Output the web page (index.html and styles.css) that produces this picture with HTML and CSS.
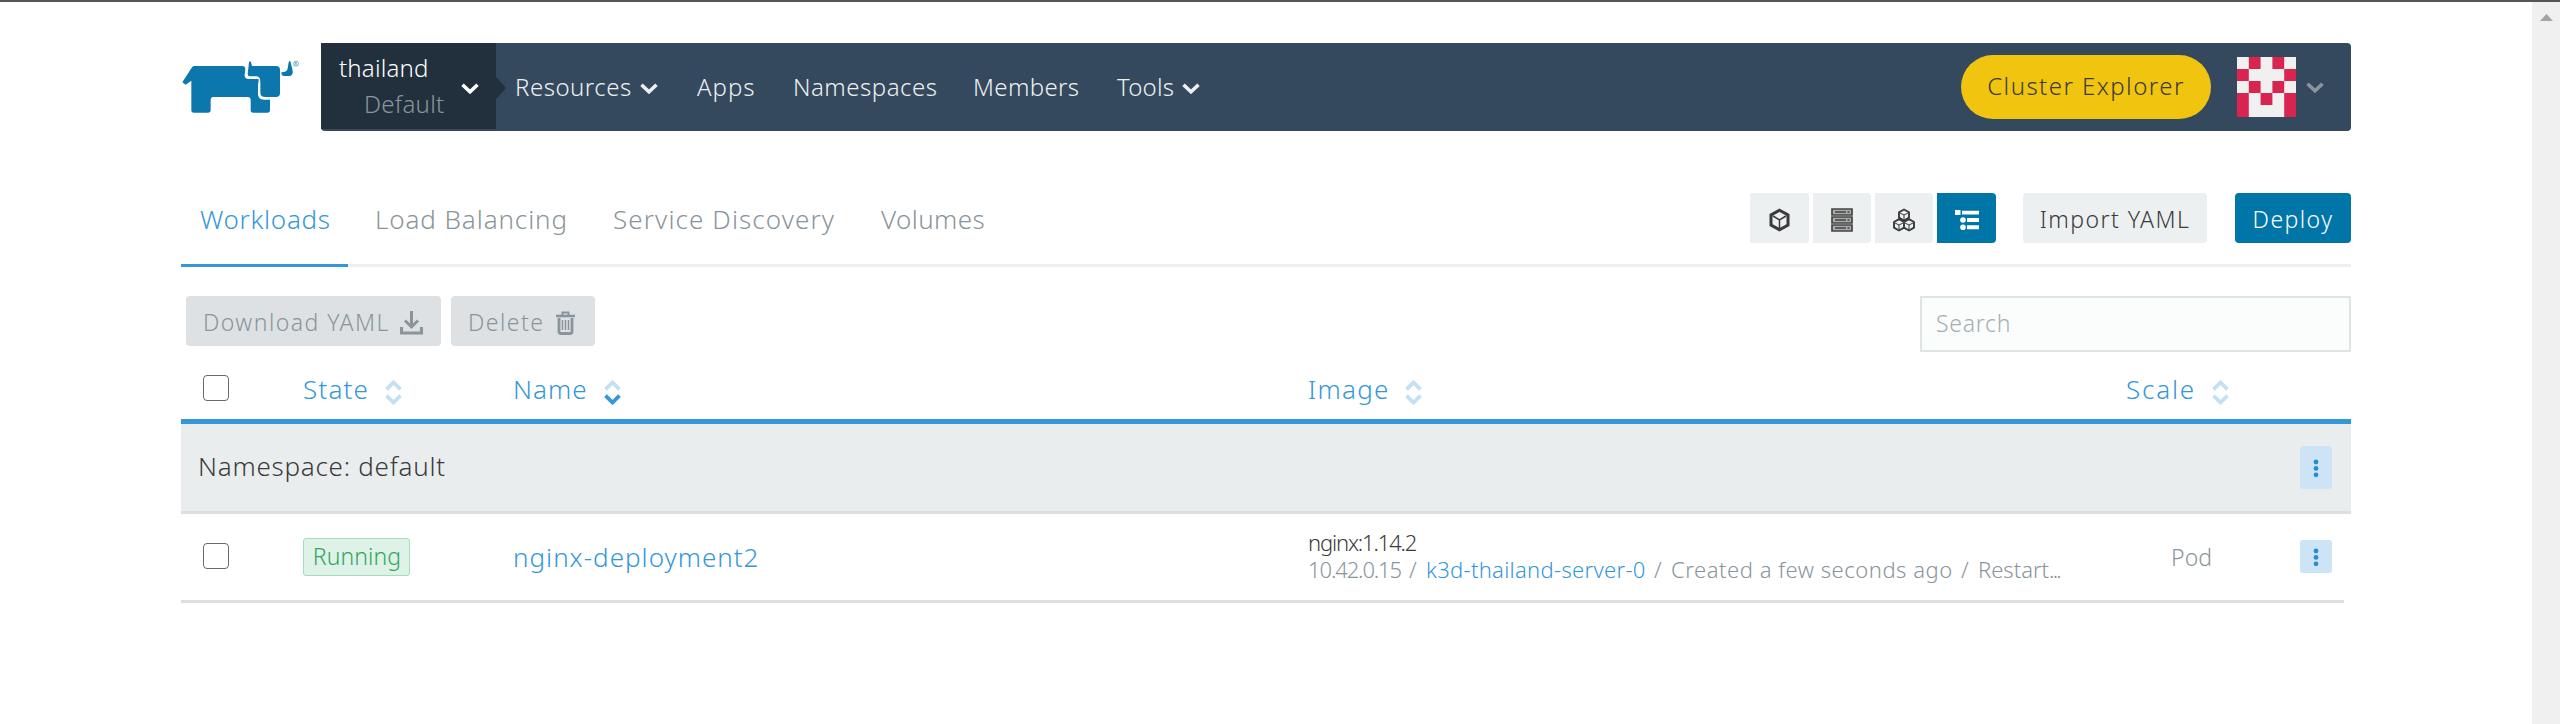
FILE: index.html
```html
<!DOCTYPE html>
<html lang="en">
<head>
<meta charset="utf-8">
<title>Workloads</title>
<link rel="stylesheet" href="styles.css">
</head>
<body>
<svg class="defs" width="0" height="0">
  <symbol id="chev" viewBox="0 0 18 11"><path d="M1.500 1.800L9 8.800L16.500 1.800" fill="none" stroke="currentColor" stroke-width="3.600"/></symbol>
  <symbol id="up" viewBox="0 0 17 11"><path d="M1.500 9.300L8.500 2.500L15.500 9.300" fill="none" stroke="currentColor" stroke-width="3.800"/></symbol>
  <symbol id="down" viewBox="0 0 17 11"><path d="M1.500 1.700L8.500 8.500L15.500 1.700" fill="none" stroke="currentColor" stroke-width="3.800"/></symbol>
  <symbol id="dots" viewBox="0 0 6 19"><circle cx="3" cy="3" r="2.400"/><circle cx="3" cy="9.400" r="2.400"/><circle cx="3" cy="15.800" r="2.400"/></symbol>
</svg>
<div class="page">
  <main class="content">
    <header class="header">
      <svg class="logo" viewBox="0 0 375 240" fill="#0c77ac">
        <path d="M44 48H186Q196 48 196 56L194 74Q193 87 206 87H234Q237 87 236 92L234 105V132Q234 149 252 149H270V180Q270 188 262 188H220Q212 188 212 180V150Q212 141 203 141H100Q92 141 92 150V180Q92 188 84 188H42Q34 188 34 180V92L17 104L7 97L36 52Q39 48 44 48Z"/>
        <path d="M203 72L207 37Q210 30 213 37L216 48H288Q300 48 300 60V130Q300 141 288 141H256Q241 141 241 128V98Q241 79 230 79H208Q203 79 203 72Z"/>
        <path d="M304 67Q322 67 323 55L326 37Q329 28 332 37L338 62Q340 78 326 78H312Q304 78 304 67Z"/>
        <circle cx="348" cy="41" r="7.5" fill="none" stroke="#0c77ac" stroke-width="1.6"/>
        <path d="M345.500 45.500V37H349Q351.500 39 349 41H346M348.500 41L351 45.500" fill="none" stroke="#0c77ac" stroke-width="1.4"/>
      </svg>
      <nav class="nav">
        <div class="scope">
          <div class="scope-names"><span class="cluster">thailand</span><span class="project">Default</span></div>
          <svg class="chev"><use href="#chev"/></svg>
        </div>
        <a class="nav-item resources">Resources<svg class="chev"><use href="#chev"/></svg></a>
        <a class="nav-item apps">Apps</a>
        <a class="nav-item namespaces">Namespaces</a>
        <a class="nav-item members">Members</a>
        <a class="nav-item tools">Tools<svg class="chev"><use href="#chev"/></svg></a>
        <div class="nav-right">
          <a class="explorer">Cluster Explorer</a>
          <svg class="avatar" viewBox="0 0 5 5" preserveAspectRatio="none"><path fill="#f0f0f0" d="M0 0h5v5H0z"/><path fill="#da2450" d="M1 0h1v1H1zM3 0h1v1H3zM0 1h1v1H0zM4 1h1v1H4zM1 2h1v1H1zM3 2h1v1H3zM0 3h1v2H0zM4 3h1v2H4zM2 3h1v1H2z"/></svg>
          <svg class="chev muted"><use href="#chev"/></svg>
        </div>
      </nav>
    </header>

    <section class="tabbar">
      <a class="tab active">Workloads</a>
      <a class="tab balancing">Load Balancing</a>
      <a class="tab discovery">Service Discovery</a>
      <a class="tab volumes">Volumes</a>
      <div class="actions">
        <div class="views">
          <button class="view"><svg width="21" height="24" viewBox="0 0 21 24"><path d="M10.500 2.200L19 7V17L10.500 21.800L2 17V7Z" fill="none" stroke="#3b3b3b" stroke-width="3"/><path d="M4 8L10.500 11.800L17 8M10.500 11.800V21" fill="none" stroke="#3b3b3b" stroke-width="1.500"/></svg></button>
          <button class="view"><svg width="22" height="24" viewBox="0 0 22 24"><path fill="#aaa" d="M1 1h20v6H1zM1 9h20v6H1zM1 17h20v6H1z"/><g fill="none" stroke="#444" stroke-width="1.700"><path d="M1 1h20v6H1zM1 9h20v6H1zM1 17h20v6H1z"/><path d="M4 4h11M4 12h11M4 20h11M16.500 4h2M16.500 12h2M16.500 20h2"/></g></svg></button>
          <button class="view"><svg width="22" height="24" viewBox="0 0 22 24"><g fill="none" stroke="#3b3b3b" stroke-width="1.900"><path d="M11 1.500L16 4.200V9.700L11 12.500L6 9.700V4.200Z"/><path d="M6 11.200L11 14V19.700L6 22.500L1 19.700V14ZM16 11.200L21 14V19.700L16 22.500L11 19.700V14Z"/><path stroke-width="1" d="M7 5L11 7L15 5M11 7V12M2 15L6 17L10 15M6 17V22M12 15L16 17L20 15M16 17V22"/></g></svg></button>
          <button class="view on"><svg width="24" height="20" viewBox="0 0 24 20" fill="#fff"><path d="M0 0h5.500v5H0zM7 .800h17v3.700H7zM12 8h12v4H12zM12 15.200h12v4H12z"/><circle cx="8" cy="10" r="2.800"/><circle cx="8" cy="17.200" r="2.800"/></svg></button>
        </div>
        <button class="btn import">Import YAML</button>
        <button class="btn deploy">Deploy</button>
      </div>
    </section>

    <section class="toolbar">
      <button class="btn disabled download">Download YAML<svg width="23" height="24" viewBox="0 0 23 24" fill="none" stroke="#8a959b"><path d="M11.500 0V15" stroke-width="3"/><path d="M5 9.500L11.500 16L18 9.500" stroke-width="3"/><path d="M1.500 16V22H21.500V16" stroke-width="3.200"/></svg></button>
      <button class="btn disabled delete">Delete<svg width="19" height="24" viewBox="0 0 19 24" fill="none" stroke="#8a959b"><path d="M0 5H19" stroke-width="2.600"/><path d="M6.500 4V1.500H12.500V4" stroke-width="2"/><path d="M3 7V20.500Q3 22.500 5 22.500H14Q16 22.500 16 20.500V7" stroke-width="2.800"/><path d="M6.500 9V19M9.500 9V19M12.500 9V19" stroke-width="1.500"/></svg></button>
      <input class="search" type="text" placeholder="Search">
    </section>

    <section class="table">
      <div class="row head">
        <span class="check"></span>
        <span class="th state">State<span class="sort"><svg><use href="#up"/></svg><svg><use href="#down"/></svg></span></span>
        <span class="th name">Name<span class="sort"><svg><use href="#up"/></svg><svg class="sorted"><use href="#down"/></svg></span></span>
        <span class="th image">Image<span class="sort"><svg><use href="#up"/></svg><svg><use href="#down"/></svg></span></span>
        <span class="th scale">Scale<span class="sort"><svg><use href="#up"/></svg><svg><use href="#down"/></svg></span></span>
      </div>
      <div class="group">
        <span class="group-name">Namespace: default</span>
        <button class="more tall"><svg><use href="#dots"/></svg></button>
      </div>
      <div class="row item">
        <span class="check"></span>
        <span class="badge">Running</span>
        <a class="workload">nginx-deployment2</a>
        <div class="details">
          <div class="image-name">nginx:1.14.2</div>
          <div class="meta"><span class="ip">10.42.0.15</span><span class="slash">/</span><a class="node">k3d-thailand-server-0</a><span class="slash">/</span><span class="created">Created a few seconds ago</span><span class="slash">/</span><span class="restart">Restart<span class="dots">...</span></span></div>
        </div>
        <span class="pod">Pod</span>
        <button class="more"><svg><use href="#dots"/></svg></button>
      </div>
    </section>
  </main>
  <aside class="scrollbar"><svg width="13" height="7" viewBox="0 0 13 7"><path d="M6.500 0L13 7H0Z" fill="#a3a3a3"/></svg></aside>
</div>
</body>
</html>
```
FILE: styles.css
```css
* { box-sizing: border-box; }
body { margin: 0; background: #fff; font-family: "Noto Sans", sans-serif; font-weight: 300; font-size: 26px; color: #3b3b3b; overflow: hidden; }
.defs { position: absolute; }
svg { display: block; flex: none; }
button { border: 0; padding: 0; font: inherit; color: inherit; display: flex; align-items: center; justify-content: center; }
.page { display: flex; justify-content: space-between; height: 724px; border-top: 2px solid #555; }
.content { width: 2170px; margin-left: 181px; padding-top: 41px; white-space: nowrap; }
.scrollbar { width: 28px; background: #f0f0f0; padding: 12px 0 0 8px; }

.header { display: flex; height: 88px; }
.logo { width: 125px; height: 80px; margin: 7px 16px 0 -1px; }
.nav { width: 2030px; display: grid; grid-template-columns: 194px 182px 96px 180px 144px 100px 1fr; background: #34495e; border-radius: 4px; color: #ecf0f1; font-size: 24px; }
.chev { width: 18px; height: 11px; }
.scope { position: relative; width: 175px; height: 86px; background: #22303d; display: flex; align-items: center; justify-content: space-between; padding: 0 17px 0 18px; }
.scope::after { content: ""; position: absolute; left: 175px; top: 34px; border: 11px solid transparent; border-left: 10px solid #22303d; border-right: 0; }
.scope .chev { color: #fff; margin-top: 4px; }
.scope-names { display: flex; flex-direction: column; line-height: 36px; padding-bottom: 1px; }
.cluster { letter-spacing: .2px; color: #fff; }
.project { letter-spacing: .25px; color: #8a959b; padding-left: 25px; }
.nav-item { display: flex; align-items: center; line-height: 85px; height: 86px; }
.nav-item .chev { margin: 5px 0 0 8px; }
.resources { letter-spacing: .5px; }
.apps { letter-spacing: 1px; }
.namespaces { letter-spacing: .5px; }
.members { letter-spacing: .35px; }
.tools { letter-spacing: .2px; }
.nav-right { display: flex; align-items: center; justify-content: flex-end; padding-right: 27px; }
.explorer { width: 250px; height: 64px; line-height: 62px; border-radius: 32px; background: #f1c40f; color: #3b3b3b; text-align: center; letter-spacing: 1.45px; }
.avatar { width: 59px; height: 60px; margin: 0 10px 0 26px; }
.muted { color: #8a959b; }

.tabbar { display: flex; height: 74px; margin-top: 62px; border-bottom: 3px solid #ecf0f1; }
.tab { height: 74px; line-height: 53px; color: #8a959b; }
.active { width: 167px; padding-left: 19px; color: #3497da; border-bottom: 3px solid #3497da; letter-spacing: .7px; }
.balancing { width: 265px; padding-left: 27px; letter-spacing: .9px; }
.discovery { width: 268px; letter-spacing: 1.1px; }
.volumes { letter-spacing: .4px; }
.actions { display: flex; margin-left: auto; }
.views { display: grid; grid-template-columns: 59px 58px 58px 59px; gap: 4px; width: 246px; }
.view { height: 50px; background: #ecf0f1; border-radius: 0 4px 4px 0; padding-top: 3px; }
.view.on { background: #0075a8; padding-top: 4px; }
.btn { height: 50px; border-radius: 4px; font-size: 23px; line-height: 50px; background: #ecf0f1; letter-spacing: 1.45px; padding-top: 1px; }
.import { width: 184px; margin-left: 27px; }
.deploy { width: 116px; margin-left: 28px; background: #0075a8; color: #fff; }

.toolbar { display: flex; margin-top: 29px; padding-left: 5px; }
.disabled { background: #dde1e4; color: #8a959b; justify-content: flex-start; padding-left: 17px; }
.download { width: 255px; }
.download svg { margin-left: 10px; margin-top: 3px; }
.delete { width: 144px; margin-left: 10px; }
.delete svg { margin-left: 12px; margin-top: 2px; }
.search { width: 431px; height: 56px; margin-left: auto; border: 2px solid #dce4e6; background: #fafdfc; padding: 0 0 3px 14px; font: 300 23px "Noto Sans", sans-serif; letter-spacing: .7px; }
.search::placeholder { color: #a5adb1; opacity: 1; }

.row { display: grid; grid-template-columns: 122px 210px 795px 761px 160px 1fr; align-items: center; }
.head { height: 72px; padding-top: 6px; border-bottom: 5px solid #3497da; color: #3497da; line-height: 34px; }
.check { width: 26px; height: 26px; margin-left: 22px; border: 1px solid #6a6a6a; border-radius: 4px; background: #fff; }
.head .check { margin-bottom: 1px; }
.th { display: flex; align-items: center; }
.sort { display: flex; flex-direction: column; gap: 3px; margin: 8px 0 0 16px; color: #c4e0f5; }
.sort svg { width: 17px; height: 11px; }
.sort .sorted { color: #3497da; }
.state { letter-spacing: 1.2px; }
.name { letter-spacing: 1px; }
.image { letter-spacing: 1.3px; }
.image .sort { margin-left: 15px; }
.scale { letter-spacing: 1.8px; justify-content: flex-end; }
.group { height: 90px; background: #e9edee; border-bottom: 3px solid #dcdfe1; display: flex; align-items: center; justify-content: space-between; padding: 0 19px 0 17px; }
.group-name { letter-spacing: .75px; padding-bottom: 3px; }
.more { width: 32px; height: 33px; border-radius: 3px; background: #cce4f6; color: #278cd2; }
.more svg { width: 6px; height: 19px; fill: currentColor; margin-right: 1px; margin-top: 2px; }
.tall { height: 43px; }
.item { width: 2163px; height: 89px; border-bottom: 3px solid #dcdfe1; padding-bottom: 2px; }
.item .more { justify-self: end; margin-right: 12px; margin-top: 1px; }
.badge { width: 107px; height: 38px; margin: 2px 0 0 0; line-height: 35px; padding-left: 1px; border: 1px solid #a3ddbb; border-radius: 3px; background: #def2e7; color: #30a660; text-align: center; font-size: 23px; letter-spacing: .1px; }
.workload { color: #3497da; letter-spacing: 1px; line-height: 36px; padding-top: 1px; }
.details { font-size: 22px; line-height: 27px; }
.image-name { letter-spacing: -1.15px; }
.meta { display: grid; grid-template-columns: 101px 17px 228px 17px 290px 17px auto; justify-content: start; color: #8a959b; }
.ip { letter-spacing: -1.1px; }
.node { color: #3497da; letter-spacing: .3px; }
.created { letter-spacing: .53px; }
.dots { letter-spacing: -1.8px; }
.pod { color: #8a959b; font-size: 23px; justify-self: end; padding-right: 17px; padding-top: 1px; }
```
